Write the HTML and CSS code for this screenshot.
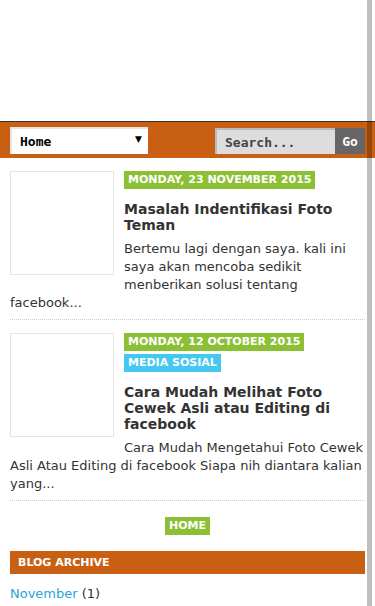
FILE: index.html
```html
<!DOCTYPE html>
<html lang="id">
<head>
    <meta charset="UTF-8">
    <meta name="viewport" content="width=device-width, initial-scale=1.0">
    <title>Blog</title>
    <link rel="stylesheet" href="styles.css">
</head>
<body>
    <div class="header"></div>

    <div class="nav-bar">
        <div class="nav-select">
            <span>Home</span>
            <span class="nav-arrow">▼</span>
        </div>
        <form class="search-form">
            <div class="search-box">Search...</div>
            <button type="button" class="search-go">Go</button>
        </form>
    </div>

    <div class="main">
        <div class="post">
            <div class="post-thumb"></div>
            <span class="label date-label">Monday, 23 November 2015</span>
            <h2 class="post-title">Masalah Indentifikasi Foto Teman</h2>
            <p class="post-snippet">Bertemu lagi dengan saya. kali ini saya akan mencoba sedikit menberikan solusi tentang facebook...</p>
        </div>

        <div class="post">
            <div class="post-thumb"></div>
            <span class="label date-label">Monday, 12 October 2015</span>
            <span class="label cat-label">Media Sosial</span>
            <h2 class="post-title">Cara Mudah Melihat Foto Cewek Asli atau Editing di facebook</h2>
            <p class="post-snippet">Cara Mudah Mengetahui Foto Cewek Asli Atau Editing di facebook Siapa nih diantara kalian yang...</p>
        </div>

        <div class="pager">
            <span class="label date-label">Home</span>
        </div>

        <div class="widget">
            <h3 class="widget-title">Blog Archive</h3>
            <div class="widget-body">
                <a href="#" class="archive-link">November</a> (1)
            </div>
        </div>
    </div>

    <div class="scroll-track"></div>
</body>
</html>
```

FILE: styles.css
```css
body {
    margin: 0;
    font-family: "DejaVu Sans", Verdana, sans-serif;
    color: #333;
    background-color: #fff;
}
.header {
    height: 121px;
}
.nav-bar {
    border-top: 1px solid #333;
    background-color: #c85f12;
    height: 36px;
    padding: 0 10px;
    display: flex;
    align-items: center;
    justify-content: space-between;
}
.nav-select {
    width: 122px;
    height: 25px;
    background-color: #fff;
    border-top: 2px solid #e4e4e4;
    border-left: 2px solid #e4e4e4;
    padding: 0 6px 0 8px;
    display: flex;
    align-items: center;
    justify-content: space-between;
    font-family: "DejaVu Sans Mono", monospace;
    font-weight: bold;
    font-size: 13px;
    color: #000;
    margin-top: 1px;
}
.nav-arrow {
    font-size: 9px;
    font-family: "DejaVu Sans", sans-serif;
    margin-top: -5px;
}
.search-form {
    display: flex;
    height: 26px;
    margin: 2px 0 0;
}
.search-box {
    width: 110px;
    background-color: #ddd;
    border-top: 2px solid #bbb;
    border-left: 2px solid #bbb;
    padding: 0 0 0 8px;
    font-family: "DejaVu Sans Mono", monospace;
    font-weight: bold;
    font-size: 13px;
    color: #444;
    display: flex;
    align-items: center;
}
.search-go {
    width: 30px;
    border: none;
    background-color: #666;
    color: #fff;
    font-family: "DejaVu Sans Mono", monospace;
    font-weight: bold;
    font-size: 13px;
    padding: 0;
}
.main {
    padding: 13px 10px 0;
}
.post {
    border-bottom: 1px dotted #ccc;
    padding-bottom: 7px;
    margin-bottom: 13px;
}
.post::after {
    content: "";
    display: block;
    clear: both;
}
.post-thumb {
    float: left;
    width: 102px;
    height: 102px;
    border: 1px solid #e5e5e5;
    margin: 0 10px 10px 0;
}
.label {
    display: table;
    color: #fff;
    font-weight: bold;
    font-size: 11px;
    text-transform: uppercase;
    line-height: 18px;
    padding: 0 4px;
    margin-bottom: 3px;
}
.date-label {
    background-color: #8bc034;
}
.cat-label {
    background-color: #45c8f0;
}
.post-title {
    font-size: 14px;
    line-height: 16px;
    margin: 12px 0 7px;
}
.post-snippet {
    font-size: 13px;
    line-height: 18px;
    margin: 0;
}
.pager {
    padding: 3px 0 16px;
}
.pager .label {
    margin: 0 auto;
}
.widget-title {
    background-color: #c85f12;
    color: #fff;
    font-size: 11px;
    text-transform: uppercase;
    margin: 0;
    line-height: 23px;
    padding: 0 8px;
}
.widget-body {
    font-size: 13px;
    line-height: 18px;
    padding-top: 11px;
}
.archive-link {
    color: #2ba3d4;
    text-decoration: none;
}
.scroll-track {
    position: fixed;
    top: 0;
    right: 3px;
    width: 5px;
    height: 100%;
    background-color: rgba(0, 0, 0, 0.25);
}
```
